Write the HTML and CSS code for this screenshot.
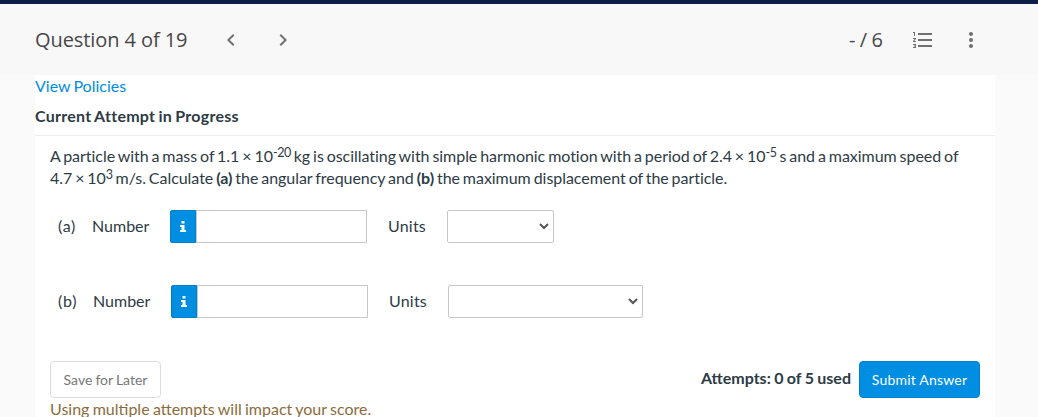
FILE: index.html
```html
<!DOCTYPE html>
<html lang="en">
<head>
  <meta charset="UTF-8">
  <meta name="viewport" content="width=device-width, initial-scale=1.0">
  <title>Question 4 of 19</title>
  <link rel="stylesheet" href="styles.css">
</head>
<body>
  <!-- Question header -->
  <header class="question-header">
    <h1 class="question-title">Question 4 of 19</h1>
    <button class="icon-button prev-button" aria-label="Previous question">
      <svg width="24" height="24" viewBox="0 0 24 24"><path d="M15.41 7.41L14 6l-6 6 6 6 1.41-1.41L10.83 12z"/></svg>
    </button>
    <button class="icon-button next-button" aria-label="Next question">
      <svg width="24" height="24" viewBox="0 0 24 24"><path d="M10 6L8.59 7.41 13.17 12l-4.58 4.59L10 18l6-6z"/></svg>
    </button>
    <div class="score">- / 6</div>
    <button class="icon-button list-button" aria-label="Question list">
      <svg width="24" height="24" viewBox="0 0 24 24"><path d="M2 17h2v.5H3v1h1v.5H2v1h3v-4H2v1zm1-9h1V4H2v1h1v3zm-1 3h1.800L2 13.100v.9h3v-1H3.200L5 10.900V10H2v1zm5-6v2h14V5H7zm0 14h14v-2H7v2zm0-6h14v-2H7v2z"/></svg>
    </button>
    <button class="icon-button more-button" aria-label="More options">
      <svg width="24" height="24" viewBox="0 0 24 24"><path d="M12 8c1.100 0 2-.9 2-2s-.9-2-2-2-2 .9-2 2 .9 2 2 2zm0 2c-1.100 0-2 .9-2 2s.9 2 2 2 2-.9 2-2-.9-2-2-2zm0 6c-1.100 0-2 .9-2 2s.9 2 2 2 2-.9 2-2-.9-2-2-2z"/></svg>
    </button>
  </header>

  <main class="panel">
    <a class="policies-link" href="#">View Policies</a>
    <h2 class="attempt-title">Current Attempt in Progress</h2>

    <section class="question">
      <p class="question-text">
        A particle with a mass of 1.1 × 10<sup>-20</sup> kg is oscillating with simple harmonic motion with a period of 2.4 × 10<sup>-5</sup> s and a maximum speed of 4.7 × 10<sup>3</sup> m/s. Calculate <b>(a)</b> the angular frequency and <b>(b)</b> the maximum displacement of the particle.
      </p>

      <div class="answer-row">
        <span class="part part-a">(a)</span>
        <label class="number-label" for="number-a">Number</label>
        <div class="input-group">
          <span class="info"><svg width="6" height="12" viewBox="0 0 6 12"><path d="M1.500 0h3v2.500h-3zM0 4h4.500v5H6v2H0v-2h1.500V6H0z"/></svg></span>
          <input class="number-input" id="number-a" type="text">
        </div>
        <label class="units-label" for="units-a">Units</label>
        <div class="select-wrap">
          <select class="units-select" id="units-a"></select>
          <svg class="caret" width="10" height="7" viewBox="0 0 10 7"><path d="M1 1l4 4 4-4"/></svg>
        </div>
      </div>

      <div class="answer-row answer-row-b">
        <span class="part part-b">(b)</span>
        <label class="number-label" for="number-b">Number</label>
        <div class="input-group">
          <span class="info"><svg width="6" height="12" viewBox="0 0 6 12"><path d="M1.500 0h3v2.500h-3zM0 4h4.500v5H6v2H0v-2h1.500V6H0z"/></svg></span>
          <input class="number-input" id="number-b" type="text">
        </div>
        <label class="units-label" for="units-b">Units</label>
        <div class="select-wrap select-wide">
          <select class="units-select" id="units-b"></select>
          <svg class="caret" width="10" height="7" viewBox="0 0 10 7"><path d="M1 1l4 4 4-4"/></svg>
        </div>
      </div>

      <div class="actions">
        <button class="btn btn-save">Save for Later</button>
        <span class="attempts">Attempts: 0 of 5 used</span>
        <button class="btn btn-submit">Submit Answer</button>
      </div>
      <p class="warning">Using multiple attempts will impact your score.</p>
    </section>
  </main>
</body>
</html>
```
FILE: styles.css
```css
* {
  box-sizing: border-box;
  margin: 0;
  padding: 0;
}

html, body {
  height: 100%;
  overflow: hidden;
}

body {
  display: flex;
  flex-direction: column;
  background: #fafafa;
  border-top: 4px solid #0f1e46;
  font-family: Lato, "Liberation Sans", sans-serif;
  font-size: 16px;
  line-height: 22px;
  color: #2d3b45;
}

/* Header */
.question-header {
  flex: none;
  display: flex;
  align-items: center;
  height: 71px;
  padding: 0 55px 0 35px;
  background: #f8f8f8;
}

.question-title,
.score {
  font-family: "Open Sans", sans-serif;
  font-size: 20px;
  font-weight: 400;
  color: #474747;
}

.question-title {
  width: 184px;
  letter-spacing: -0.08px;
  white-space: nowrap;
}

.score {
  margin-left: auto;
  word-spacing: -0.8px;
}

.icon-button {
  display: flex;
  width: 24px;
  height: 24px;
  border: none;
  background: none;
}

.icon-button svg {
  fill: #707070;
}

.next-button {
  margin-left: 28px;
}

.list-button {
  margin-left: 28px;
}

.more-button {
  margin-left: 24px;
}

/* Panel */
.panel {
  flex: 1;
  width: 960px;
  margin-left: 35px;
  background: #fff;
}

.policies-link {
  display: block;
  color: #008ee2;
  word-spacing: -1px;
  text-decoration: none;
}

.attempt-title {
  margin-top: 8px;
  font-size: 16px;
  font-weight: 700;
  letter-spacing: 0.27px;
  word-spacing: -1px;
}

.question {
  margin-top: 8px;
  padding: 9px 15px 0;
  border-top: 1px solid #ededed;
}

.question-text {
  letter-spacing: -0.04px;
  word-spacing: -1.13px;
}

.question-text sup {
  font-size: 12.5px;
  line-height: 0;
  letter-spacing: -0.4px;
  vertical-align: 5px;
}

/* Answer rows */
.answer-row {
  display: flex;
  align-items: center;
  height: 33px;
  margin-top: 21px;
  padding-left: 8px;
}

.answer-row-b {
  margin-top: 42px;
}

.part,
.number-label,
.units-label {
  padding-bottom: 2px;
}

.part {
  width: 34px;
  letter-spacing: 0.7px;
}

.part-b {
  width: 35px;
}

.number-label {
  width: 78px;
}

.input-group {
  display: flex;
  width: 197px;
  height: 33px;
}

.info {
  display: flex;
  align-items: center;
  justify-content: center;
  width: 26px;
  border: 1px solid #0081cd;
  border-radius: 2px 0 0 2px;
  background: #008ee2;
}

.info svg {
  fill: #fff;
}

.number-input {
  width: 171px;
  border: 1px solid #c7c7c7;
}

.units-label {
  width: 59px;
  margin-left: 21px;
  letter-spacing: 0.2px;
}

.select-wrap {
  position: relative;
  width: 107px;
  height: 33px;
}

.select-wide {
  width: 195px;
}

.units-select {
  width: 100%;
  height: 100%;
  border: 1px solid #c7c7c7;
  border-radius: 2px;
  background: #fff;
  appearance: none;
}

.caret {
  position: absolute;
  top: 13px;
  right: 5px;
  fill: none;
  stroke: #555;
  stroke-width: 2;
}

/* Footer actions */
.actions {
  display: flex;
  align-items: center;
  margin-top: 43px;
}

.btn {
  height: 37px;
  border: 1px solid #dcdcdc;
  border-radius: 4px;
  font-family: inherit;
  font-size: 14px;
  letter-spacing: 0.2px;
}

.btn-save {
  width: 111px;
  background: #fff;
  color: #777;
  letter-spacing: 0;
  word-spacing: -0.5px;
}

.attempts {
  margin-left: auto;
  margin-right: 8px;
  padding-bottom: 3px;
  font-weight: 700;
  word-spacing: -0.5px;
}

.btn-submit {
  width: 121px;
  border-color: #0081cd;
  background: #008ee2;
  color: #fff;
}

.warning {
  color: #8a6d3b;
  word-spacing: -0.8px;
}
```
